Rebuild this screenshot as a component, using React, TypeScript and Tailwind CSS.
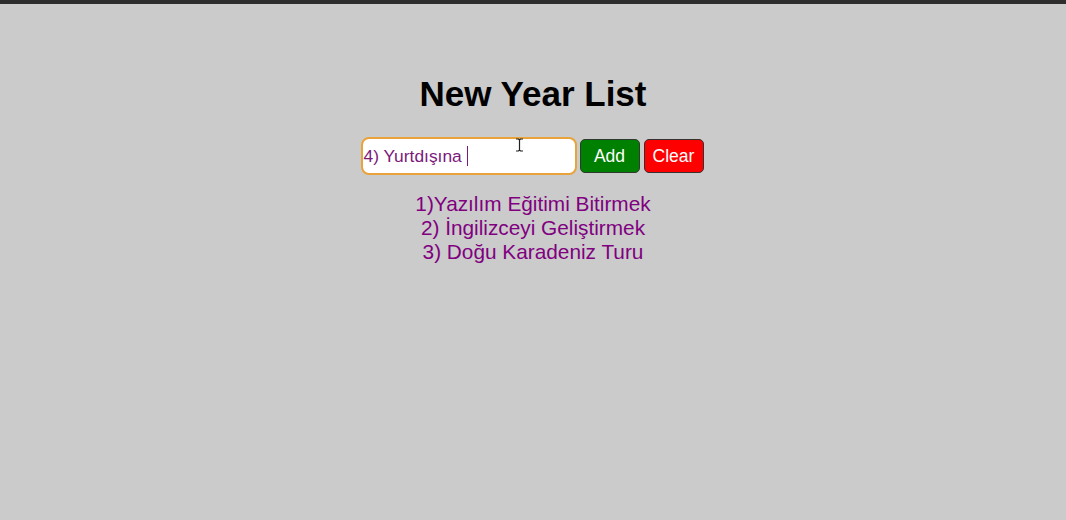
import React from "react";

export default function App() {
  return (
    <div className="min-h-[520px] w-full bg-[#cbcbcb] relative" style={{ fontFamily: '"Liberation Sans", Arial, sans-serif' }}>
      <div className="h-[4px] w-full bg-[#2e2e2e]" />
      <div className="flex flex-col items-center pt-[70px]">
        <h1 className="text-[35px] font-bold text-black leading-[40px]">
          New Year List
        </h1>
        <div className="mt-[23px] flex items-center -ml-[2px]">
          <div className="w-[216px] h-[38px] rounded-[8px] border-2 border-[#e8a33a] bg-white flex items-center pl-[1px]">
            <span className="text-[17.4px] text-[#7b1a7b]">4) Yurtdışına</span>
            <span className="ml-[5px] inline-block w-[1px] h-[20px] bg-[#7b1a7b]" />
          </div>
          <button className="ml-[3px] w-[60px] h-[34px] rounded-[5px] bg-[#008000] border border-[#2f3a2f] text-white text-[17.5px]">
            Add
          </button>
          <button className="ml-[4px] w-[60px] h-[34px] rounded-[5px] bg-[#ff0000] border border-[#3a2f2f] text-white text-[17.5px]">
            Clear
          </button>
        </div>
        <div className="mt-[17px] flex flex-col items-center text-[20.8px] leading-[24px] text-[#800080]">
          <div>1)Yazılım Eğitimi Bitirmek</div>
          <div>2) İngilizceyi Geliştirmek</div>
          <div>3) Doğu Karadeniz Turu</div>
        </div>
      </div>
      <svg className="absolute left-[515px] top-[138px]" width="9" height="14" viewBox="0 0 9 14">
        <path d="M1 1 H3.5 L4.5 2 L5.5 1 H8 M4.5 2 V12 M1 13 H3.5 L4.5 12 L5.5 13 H8" stroke="#222" strokeWidth="1.2" fill="none" />
      </svg>
    </div>
  );
}
